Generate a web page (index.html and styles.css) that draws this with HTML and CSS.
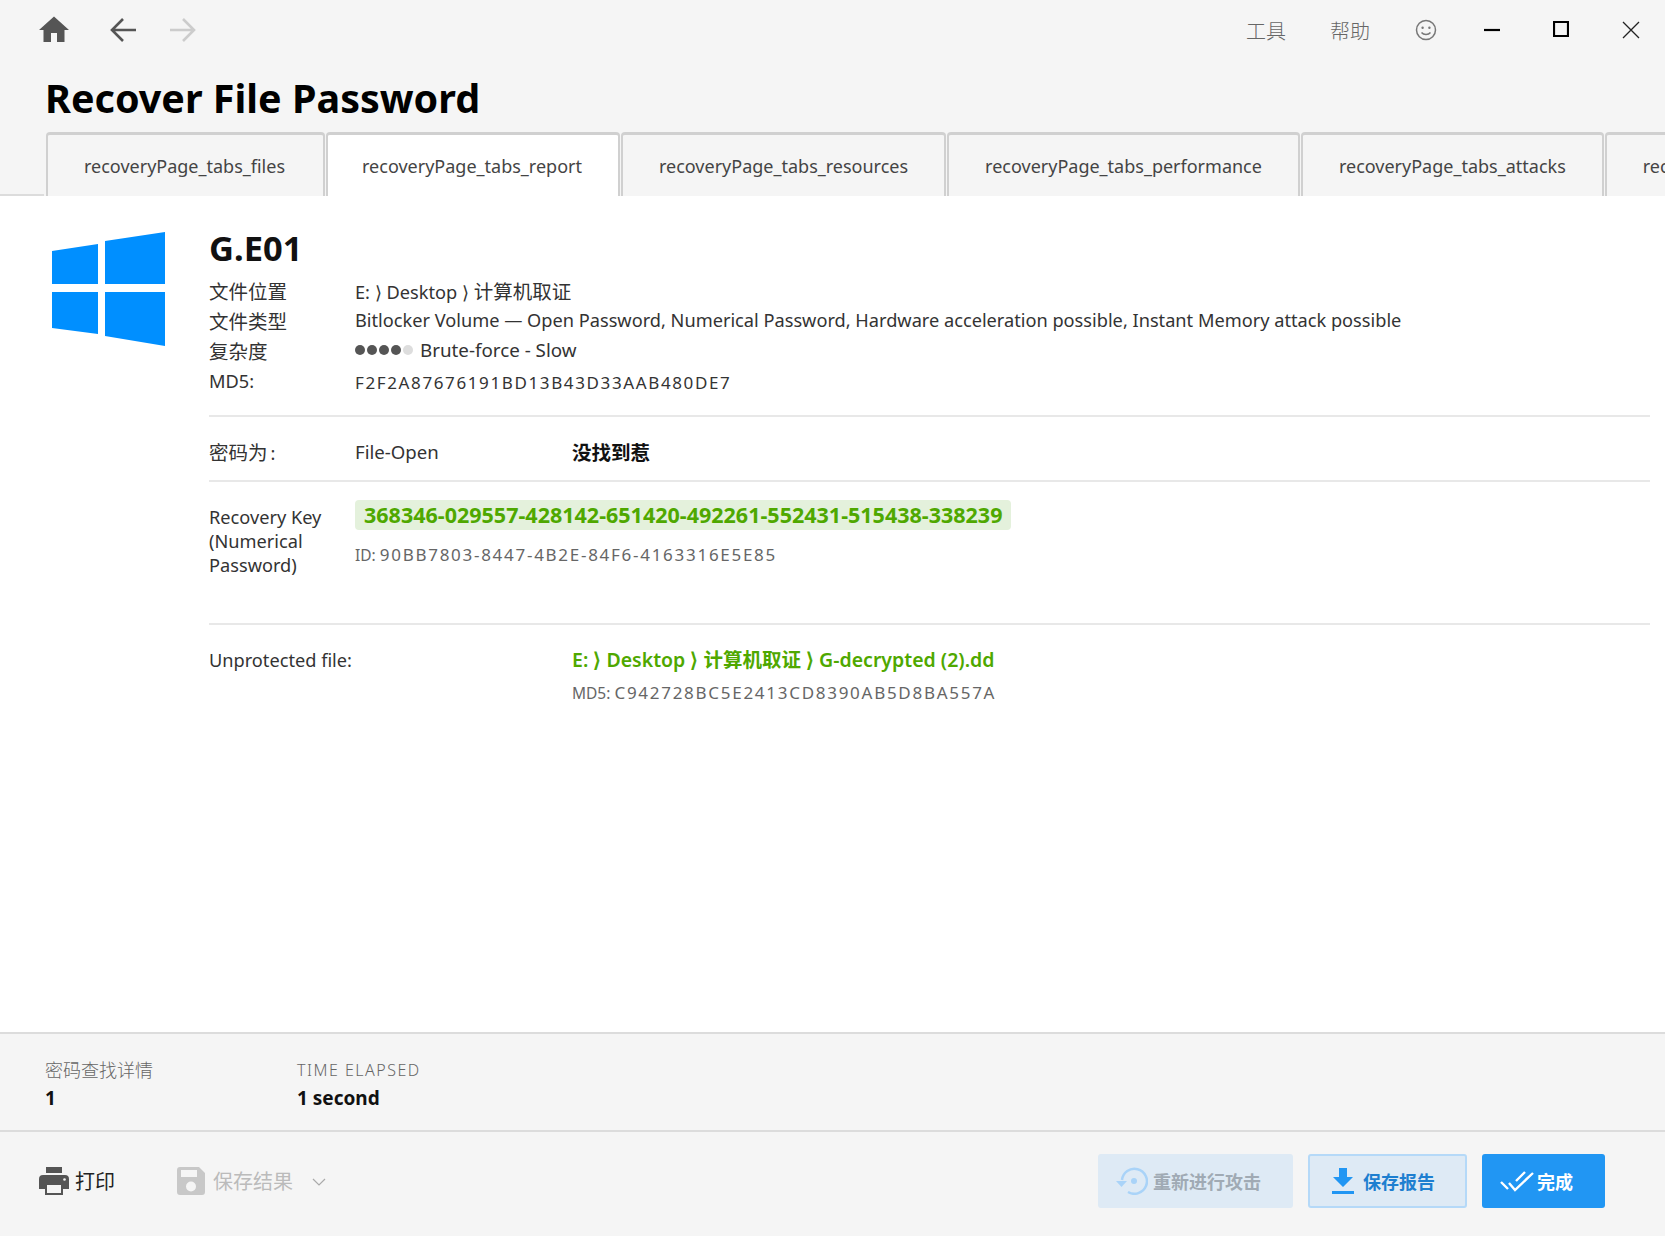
FILE: index.html
```html
<!DOCTYPE html>
<html lang="zh">
<head>
    <meta charset="UTF-8">
    <title>Recover File Password</title>
    <link rel="stylesheet" href="styles.css">
</head>
<body>
    <div class="app">
        <div class="topbar">
            <div class="nav">
                <svg class="icon-home" viewBox="0 0 24 24"><path d="M10 20v-6h4v6h5v-8h3L12 3 2 12h3v8z"/></svg>
                <svg class="icon-arrow back" viewBox="0 0 26 24"><path d="M26 12H2M13 1 2 12l11 11"/></svg>
                <svg class="icon-arrow off" viewBox="0 0 26 24"><path d="M0 12h24M13 1l11 11-11 11"/></svg>
            </div>
            <div class="menu">
                <span class="menu-item">工具</span>
                <span class="menu-item">帮助</span>
                <svg class="icon-smile" viewBox="0 0 22 22"><circle cx="11" cy="11" r="9.5"/><circle class="dot" cx="7.6" cy="8.8" r="1.2"/><circle class="dot" cx="14.4" cy="8.8" r="1.2"/><path d="M6.5 13.5c2.2 2.8 6.8 2.8 9 0"/></svg>
                <div class="win-btns">
                    <svg class="win-min" viewBox="0 0 16 16"><path d="M0 8h16"/></svg>
                    <svg class="win-max" viewBox="0 0 16 16"><path d="M1 1h14v14H1z"/></svg>
                    <svg class="win-close" viewBox="0 0 18 18"><path d="M1 1l16 16M17 1 1 17"/></svg>
                </div>
            </div>
        </div>

        <h1 class="page-title">Recover File Password</h1>

        <div class="tabs">
            <div class="tab first">recoveryPage_tabs_files</div>
            <div class="tab active">recoveryPage_tabs_report</div>
            <div class="tab">recoveryPage_tabs_resources</div>
            <div class="tab">recoveryPage_tabs_performance</div>
            <div class="tab">recoveryPage_tabs_attacks</div>
            <div class="tab last">rec</div>
        </div>

        <div class="content">
            <svg class="win-logo" viewBox="0 0 114 114"><path d="M0 19 46 12V52H0zM53 9 113 0V52H53zM0 60h46v42L0 96zM53 60h60v54L53 104z"/></svg>
            <div class="report">
                <div class="file-name">G.E01</div>
                <div class="info">
                    <div class="row"><span class="label cjk">文件位置</span><span>E: ⟩ Desktop ⟩ <span class="cjk">计算机取证</span></span></div>
                    <div class="row"><span class="label cjk">文件类型</span><span>Bitlocker Volume — Open Password, Numerical Password, Hardware acceleration possible, Instant Memory attack possible</span></div>
                    <div class="row">
                        <span class="label cjk">复杂度</span>
                        <span class="dots"><i></i><i></i><i></i><i></i><i class="off"></i></span>
                        <span class="complexity">Brute-force - Slow</span>
                    </div>
                    <div class="row"><span class="label md5">MD5:</span><span class="hash first">F2F2A87676191BD13B43D33AAB480DE7</span></div>
                </div>

                <div class="section pass">
                    <div class="row">
                        <span class="label"><span class="cjk">密码为</span>&#8201;:</span>
                        <span class="pass-type">File-Open</span>
                        <b class="cjk">没找到惹</b>
                    </div>
                </div>

                <div class="section key">
                    <div class="key-label">Recovery Key<br>(Numerical<br>Password)</div>
                    <div>
                        <div class="key-value">368346-029557-428142-651420-492261-552431-515438-338239</div>
                        <div class="sub">ID: <span class="hash">90BB7803-8447-4B2E-84F6-4163316E5E85</span></div>
                    </div>
                </div>

                <div class="section unprotected">
                    <div class="unprotected-label">Unprotected file:</div>
                    <div>
                        <div class="file-link">E: ⟩ Desktop ⟩ 计算机取证 ⟩ G-decrypted (2).dd</div>
                        <div class="sub">MD5: <span class="hash">C942728BC5E2413CD8390AB5D8BA557A</span></div>
                    </div>
                </div>
            </div>
        </div>

        <div class="stats">
            <div class="stat stat-first">
                <div class="stat-name">密码查找详情</div>
                <div class="stat-value">1</div>
            </div>
            <div class="stat">
                <div class="stat-name caps">TIME ELAPSED</div>
                <div class="stat-value">1 second</div>
            </div>
        </div>

        <div class="footer">
            <div class="footer-left">
                <div class="tool">
                    <svg class="icon-print" viewBox="0 0 30 28"><path d="M7 0h16v6H7zM4 8h22a4 4 0 0 1 4 4v10h-6v6H6v-6H0V12a4 4 0 0 1 4-4z"/><path class="hole" d="M8 18h14v8H8z"/><circle class="hole" cx="25.500" cy="12.500" r="1.300"/></svg>
                    <span>打印</span>
                </div>
                <div class="tool disabled">
                    <svg class="icon-save" viewBox="0 0 28 28"><path fill-rule="evenodd" d="M3 0h19l6 6v19a3 3 0 0 1-3 3H3a3 3 0 0 1-3-3V3a3 3 0 0 1 3-3zM4 3v7h16V3zM14 14.500a5 5 0 1 0 0 10 5 5 0 0 0 0-10z"/></svg>
                    <span>保存结果</span>
                    <svg class="icon-chevron" viewBox="0 0 14 8"><path d="M1 1l6 6 6-6"/></svg>
                </div>
            </div>
            <div class="footer-right">
                <div class="btn btn-retry">
                    <svg class="icon-retry" viewBox="0 0 32 28"><path d="M6 13A12.500 12.500 0 1 1 12 25"/><path class="fill" d="M0 14h11l-5.500 6z"/><circle class="fill" cx="18" cy="14" r="3"/></svg>
                    <span>重新进行攻击</span>
                </div>
                <div class="btn btn-save">
                    <svg class="icon-download" viewBox="0 0 22 26"><path class="fill" d="M7 0h8v9h6L11 19 1 9h6zM0 23h22v3H0z"/></svg>
                    <span>保存报告</span>
                </div>
                <div class="btn btn-done">
                    <svg class="icon-check" viewBox="0 0 34 22"><path d="M1 12l7 7M9 13l6 7L33 3M16 11l9-9"/></svg>
                    <span>完成</span>
                </div>
            </div>
        </div>
    </div>
</body>
</html>
```

FILE: styles.css
```css
* {
    box-sizing: border-box;
}

body {
    margin: 0;
    padding: 0;
    font-family: "Noto Sans", "Noto Sans CJK SC", sans-serif;
    font-size: 18px;
    color: #333;
    background-color: #f5f5f5;
}

.app {
    display: flex;
    flex-direction: column;
    height: 1236px;
    overflow: hidden;
}

svg {
    display: block;
    flex: none;
}

.cjk {
    font-size: 19.500px;
}

/* top bar */
.topbar {
    display: flex;
    justify-content: space-between;
    align-items: center;
    height: 60px;
    padding: 0 24px 0 36px;
}

.nav {
    display: flex;
    align-items: center;
    gap: 34px;
}

.icon-home {
    width: 36px;
    height: 36px;
    fill: #555;
}

.icon-arrow {
    width: 26px;
    height: 24px;
    fill: none;
    stroke: #555;
    stroke-width: 2.6;
}

.icon-arrow.back {
    margin-left: 4px;
}

.icon-arrow.off {
    stroke: #ccc;
}

.menu {
    display: flex;
    align-items: center;
}

.menu-item {
    font-size: 20px;
    font-weight: 300;
    color: #666;
    margin-right: 44px;
}

.menu-item + .menu-item {
    margin-right: 45px;
}

.icon-smile {
    width: 22px;
    height: 22px;
    fill: none;
    stroke: #777;
    stroke-width: 1.500;
}

.icon-smile .dot {
    fill: #777;
    stroke: none;
}

.win-btns {
    display: flex;
    align-items: center;
    gap: 54px;
    margin-left: 47px;
}

.win-min, .win-max {
    width: 16px;
    height: 16px;
    fill: none;
    stroke: #000;
    stroke-width: 2.200;
}

.win-min {
    margin-right: -1px;
}

.win-max {
    margin-top: -2px;
}

.win-close {
    width: 18px;
    height: 18px;
    margin-left: -1px;
    margin-right: 1px;
    fill: none;
    stroke: #222;
    stroke-width: 1.300;
}

.page-title {
    margin: 0;
    height: 72px;
    padding-left: 45px;
    font-size: 39.500px;
    line-height: 76px;
    font-weight: 700;
    color: #000;
}

/* tabs */
.tabs {
    display: flex;
    align-items: flex-end;
    gap: 1px;
    height: 64px;
    overflow: hidden;
}

.tabs::before {
    content: "";
    flex: none;
    width: 44px;
    margin-right: 1px;
    height: 2px;
    background-color: #dcdcdc;
}

.tab {
    flex: none;
    height: 64px;
    padding: 0 36px;
    line-height: 62px;
    white-space: nowrap;
    color: #444;
    background-color: #f5f5f5;
    border: 2px solid #d0d0d0;
    border-top-width: 3px;
    border-bottom: none;
    border-radius: 4px 4px 0 0;
}

.tab.first {
    padding-right: 38px;
}

.tab.active {
    padding-left: 34px;
    background-color: white;
}

.tab.last {
    flex: 1;
    padding-right: 0;
    border-right: none;
}

/* report */
.content {
    flex: 1;
    display: flex;
    padding: 36px 15px 0 52px;
    background-color: white;
}

.win-logo {
    width: 114px;
    height: 114px;
    margin-right: 43px;
    fill: #008fff;
}

.report {
    flex: 1;
    font-size: 18.200px;
}

.file-name {
    height: 44px;
    font-size: 34.500px;
    line-height: 32px;
    font-weight: 700;
    color: #111;
}

.row {
    display: flex;
    align-items: center;
    height: 30px;
}

.label {
    width: 146px;
    flex: none;
}

.label.md5 {
    padding-top: 2px;
}

.info {
    margin-top: -1px;
    padding-bottom: 20px;
}

.dots {
    display: flex;
    gap: 2px;
    margin-right: 7px;
}

.dots i {
    width: 10px;
    height: 10px;
    border-radius: 50%;
    background-color: #555;
}

.dots i.off {
    background-color: #ddd;
}

.complexity {
    font-size: 18.800px;
}

.hash {
    font-size: 17px;
    letter-spacing: 1.720px;
}

.hash.first {
    padding-top: 4px;
    letter-spacing: 1.620px;
}

.section {
    border-top: 2px solid #e8e8e8;
}

.pass {
    padding: 19px 0 14px;
}

.pass-type {
    width: 217px;
    flex: none;
    font-size: 18.600px;
}

.pass b {
    font-weight: 700;
    color: #111;
}

.key {
    display: flex;
    height: 143px;
    padding-top: 18px;
}

.key-label {
    width: 146px;
    flex: none;
    padding-top: 5px;
    line-height: 24px;
}

.key-value {
    height: 30px;
    padding: 0 9px;
    font-size: 21.500px;
    line-height: 30px;
    font-weight: 700;
    color: #4fa800;
    background-color: #e4f1dc;
    border-radius: 4px;
}

.sub {
    margin-top: 10px;
    line-height: 30px;
    font-size: 15.500px;
    color: #666;
}

.unprotected {
    display: flex;
    padding-top: 20px;
}

.unprotected-label {
    width: 363px;
    line-height: 30px;
}

.file-link {
    line-height: 30px;
    font-size: 19.500px;
    font-weight: 600;
    color: #4fa800;
}

.unprotected .sub {
    margin-top: 3px;
}

/* bottom */
.stats {
    flex: none;
    display: flex;
    height: 100px;
    padding: 22px 0 0 45px;
    border-top: 2px solid #dcdcdc;
    border-bottom: 2px solid #dcdcdc;
}

.stat-first {
    width: 252px;
}

.stat-name {
    height: 28px;
    line-height: 28px;
    font-size: 18px;
    font-weight: 300;
    color: #666;
}

.caps {
    font-size: 16px;
    letter-spacing: 1.500px;
}

.stat-value {
    line-height: 28px;
    font-size: 19px;
    font-weight: 700;
    color: #111;
}

.footer {
    flex: none;
    display: flex;
    justify-content: space-between;
    align-items: center;
    height: 104px;
    padding: 0 60px 7px 39px;
}

.footer-left {
    display: flex;
    align-items: center;
    gap: 62px;
}

.footer-right {
    display: flex;
    gap: 15px;
}

.tool {
    display: flex;
    align-items: center;
    gap: 6px;
    font-size: 20px;
    color: #222;
}

.tool.disabled {
    gap: 8px;
    color: #bbb;
}

.icon-print {
    width: 30px;
    height: 28px;
    fill: #555;
}

.icon-print .hole {
    fill: #f5f5f5;
}

.icon-save {
    width: 28px;
    height: 28px;
    fill: #c8c8c8;
}

.icon-chevron {
    width: 14px;
    height: 8px;
    margin-left: 11px;
    margin-top: 3px;
    fill: none;
    stroke: #aaa;
    stroke-width: 1.200;
}

.btn {
    display: flex;
    align-items: center;
    gap: 5px;
    height: 54px;
    font-size: 18px;
    font-weight: 700;
    border-radius: 3px;
}

.btn-retry {
    width: 195px;
    padding-left: 18px;
    color: #a0aab4;
    background-color: #deeaf5;
}

.icon-retry {
    width: 32px;
    height: 28px;
    fill: none;
    stroke: #a9d3f8;
    stroke-width: 2.500;
}

.icon-retry .fill {
    fill: #a9d3f8;
    stroke: none;
}

.btn-save {
    width: 159px;
    padding-left: 22px;
    gap: 9px;
    color: #1e7fd0;
    background-color: #deeaf5;
    border: 2px solid #b5d9f8;
}

.icon-download {
    width: 22px;
    height: 26px;
}

.icon-download .fill {
    fill: #2196f3;
}

.btn-done {
    width: 123px;
    padding-left: 18px;
    gap: 3px;
    color: white;
    background-color: #2196f3;
}

.icon-check {
    width: 34px;
    height: 22px;
    fill: none;
    stroke: white;
    stroke-width: 2.400;
}
```
